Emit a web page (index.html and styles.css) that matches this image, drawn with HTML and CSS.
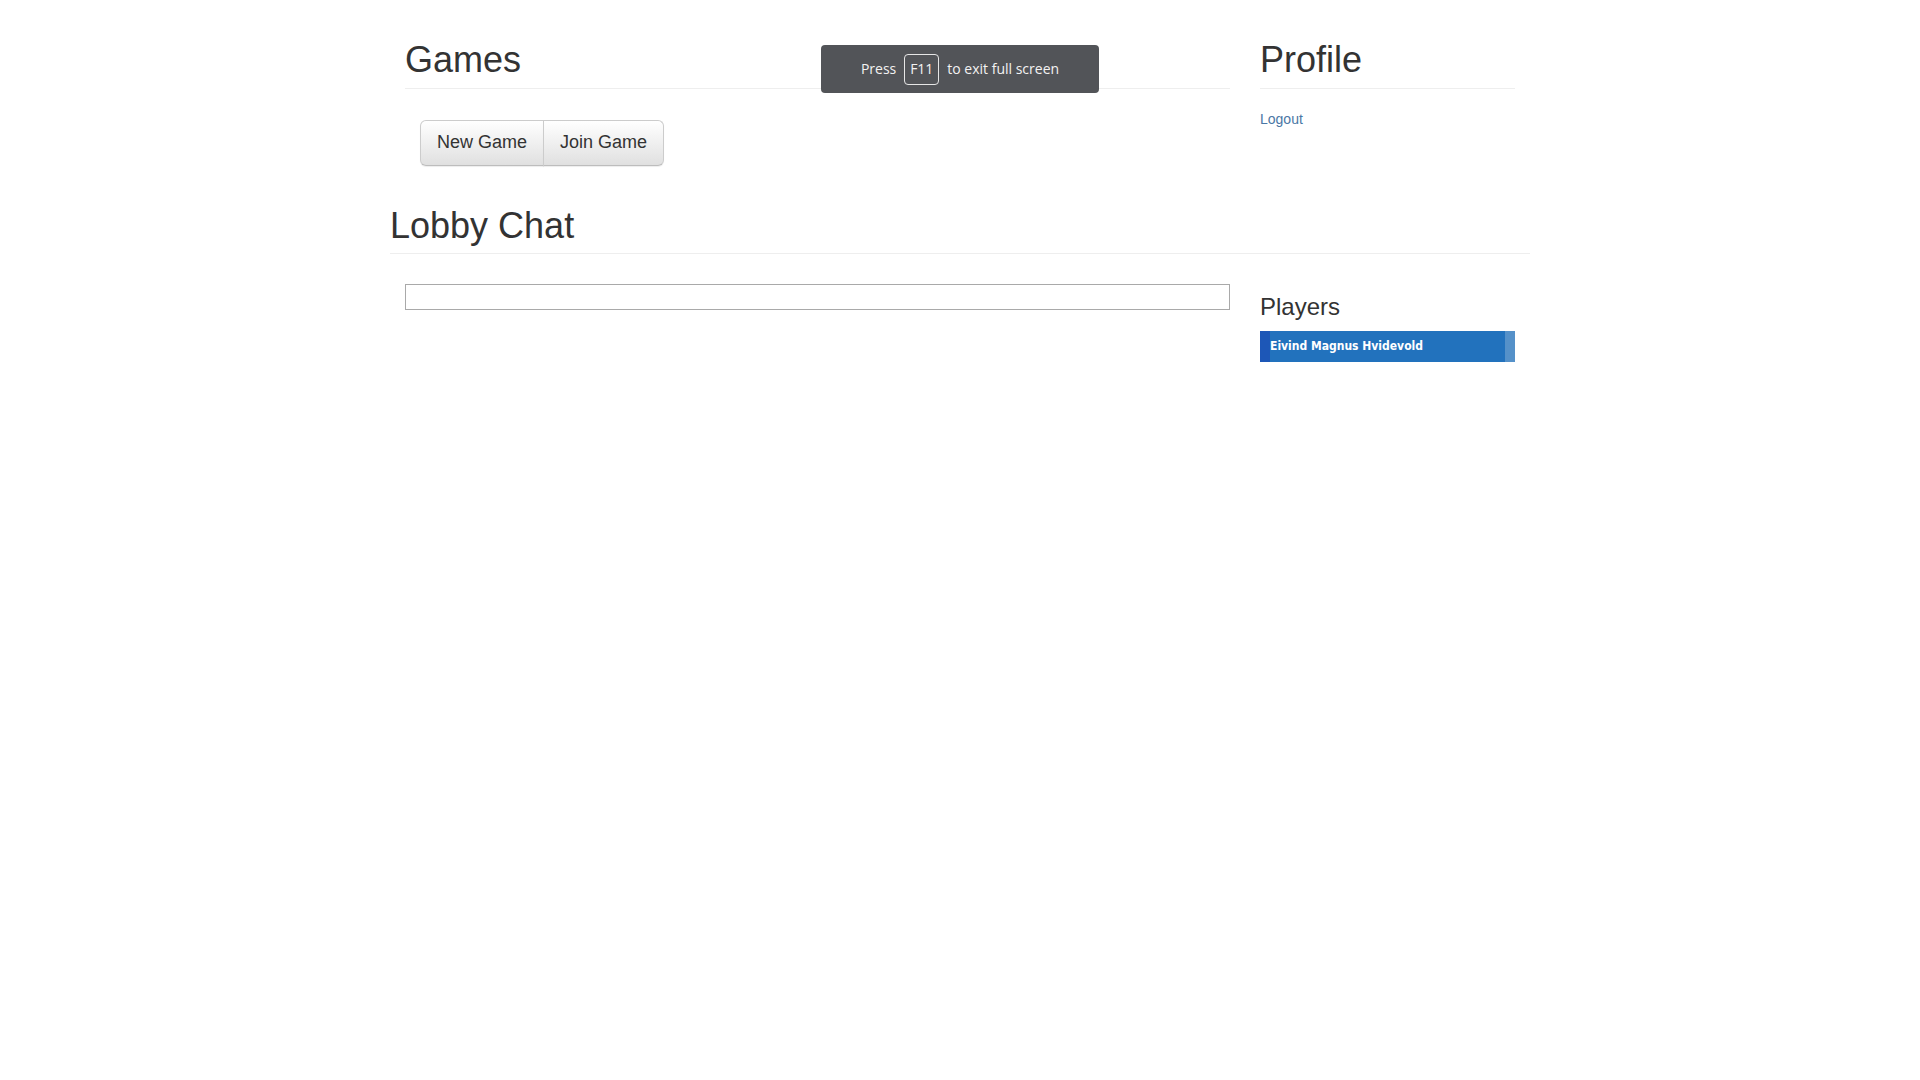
FILE: index.html
```html
<!DOCTYPE html>
<html lang="en">
<head>
<meta charset="utf-8">
<title>Lobby</title>
<link rel="stylesheet" href="styles.css">
</head>
<body>
<div class="container">
  <div class="row">
    <div class="col-main">
      <div class="page-header"><h1>Games</h1></div>
      <div class="btn-area">
        <div class="btn-group">
          <button class="btn">New Game</button>
          <button class="btn">Join Game</button>
        </div>
      </div>
    </div>
    <div class="col-side">
      <div class="page-header"><h1>Profile</h1></div>
      <a class="link" href="#">Logout</a>
    </div>
  </div>
  <div class="page-header wide"><h1>Lobby Chat</h1></div>
  <div class="row">
    <div class="col-main">
      <input class="chat-input" type="text">
    </div>
    <div class="col-side">
      <h3>Players</h3>
      <div class="player-list">
        <div class="strip-left"></div>
        <div class="player-name">Eivind Magnus Hvidevold</div>
        <div class="strip-right"></div>
      </div>
    </div>
  </div>
</div>
<div class="fs-toast">
  <span>Press</span><span class="key">F11</span><span>to exit full screen</span>
</div>
</body>
</html>
```

FILE: styles.css
```css
* { box-sizing: border-box; }
html, body { margin: 0; padding: 0; background: #fff; }
body {
  font-family: "Liberation Sans", Arial, sans-serif;
  font-size: 14px;
  line-height: 1.42857;
  color: #333;
}
.container {
  width: 1170px;
  margin: 0 auto;
  padding: 0 15px;
}
.row { display: flex; }
.col-main { width: 855px; padding: 0 15px; }
.col-side { width: 285px; padding: 0 15px; }

.page-header {
  padding-bottom: 8px;
  margin: 40px 0 20px;
  border-bottom: 1px solid #eee;
}
.page-header h1 {
  margin: 0;
  font-size: 36px;
  font-weight: 500;
  line-height: 1.1;
  color: #333;
}

.btn-area { padding: 11px 15px 0; }
.btn-group { display: inline-flex; }
.btn {
  font-family: "Liberation Sans", Arial, sans-serif;
  font-size: 18px;
  line-height: 1.3333;
  padding: 10px 16px;
  height: 46px;
  color: #333;
  background: linear-gradient(to bottom, #ffffff 0%, #e0e0e0 100%);
  border: 1px solid #ccc;
  border-bottom-color: #bdbdbd;
  box-shadow: inset 0 1px 0 rgba(255,255,255,.15), 0 1px 1px rgba(0,0,0,.075);
  cursor: pointer;
}
.btn:first-child { border-radius: 6px 0 0 6px; }
.btn:last-child { border-radius: 0 6px 6px 0; margin-left: -1px; }

.link {
  display: block;
  color: #4a77a5;
  text-decoration: none;
  font-size: 14px;
  line-height: 20px;
}

.chat-input {
  display: block;
  width: 100%;
  height: 26px;
  margin-top: 10px;
  border: 1px solid #a9a9a9;
  background: #fff;
  padding: 2px 4px;
}

h3 {
  margin: 20px 0 10px;
  font-size: 24px;
  font-weight: 500;
  line-height: 1.1;
  color: #333;
}

.player-list {
  display: flex;
  height: 31px;
  background: #2272bd;
}
.strip-left { width: 10px; background: #1d57b7; }
.strip-right { width: 10px; background: #5591c9; }
.player-name {
  flex: 1;
  color: #fff;
  font-family: "DejaVu Sans Condensed", "DejaVu Sans", sans-serif;
  font-weight: bold;
  font-size: 12px;
  line-height: 31px;
}

.fs-toast {
  position: fixed;
  top: 45px;
  left: 50%;
  transform: translateX(-50%);
  width: 278px;
  height: 48px;
  background: #525458;
  border-radius: 4px;
  display: flex;
  align-items: center;
  justify-content: center;
  gap: 8px;
  color: #f2f2f2;
  font-family: "Open Sans", "Noto Sans", sans-serif;
  font-size: 14px;
}
.key {
  display: inline-flex;
  align-items: center;
  justify-content: center;
  width: 35px;
  height: 31px;
  border: 1px solid #e6e6e6;
  border-radius: 4px;
}
```
